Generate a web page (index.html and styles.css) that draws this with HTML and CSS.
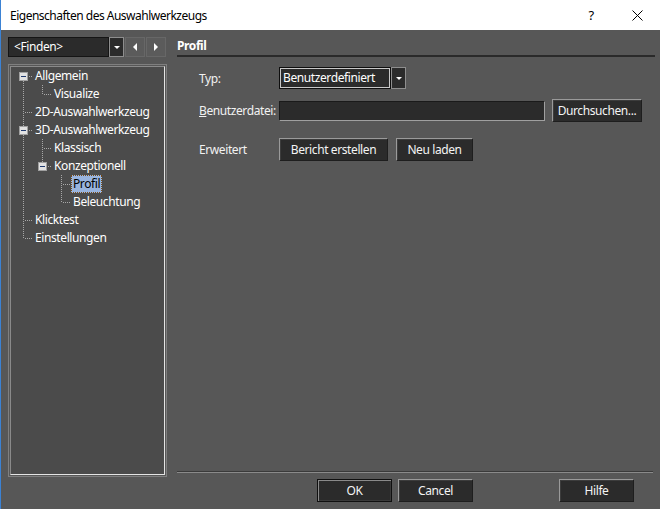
FILE: index.html
```html
<!DOCTYPE html>
<html lang="de">
<head>
<meta charset="utf-8">
<title>Eigenschaften des Auswahlwerkzeugs</title>
<link rel="stylesheet" href="styles.css">
</head>
<body>
<div class="titlebar">
  <span class="title">Eigenschaften des Auswahlwerkzeugs</span>
  <span class="tb-btn tb-help">?</span>
  <span class="tb-btn tb-close"><svg width="11" height="11" viewBox="0 0 11 11"><path d="M0.5 0.5 L10.5 10.5 M10.5 0.5 L0.5 10.5" stroke="#000" stroke-width="1" fill="none"/></svg></span>
</div>
<div class="window">
  <div class="left">
    <div class="findrow">
      <div class="find-input">&lt;Finden&gt;</div>
      <div class="dd-btn"><span class="tri-down"></span></div>
      <div class="nav-btn"><span class="tri-left"></span></div>
      <div class="nav-btn"><span class="tri-right"></span></div>
    </div>
    <div class="tree">
      <div class="tree-inner">
        <div class="row"><span class="cell root-first"><span class="box"></span></span><span class="label">Allgemein</span></div>
        <div class="row"><span class="cell pipe"></span><span class="cell elbow"></span><span class="label">Visualize</span></div>
        <div class="row"><span class="cell tee"></span><span class="label">2D-Auswahlwerkzeug</span></div>
        <div class="row"><span class="cell tee-box"><span class="box"></span></span><span class="label">3D-Auswahlwerkzeug</span></div>
        <div class="row"><span class="cell pipe"></span><span class="cell tee"></span><span class="label">Klassisch</span></div>
        <div class="row"><span class="cell pipe"></span><span class="cell elbow-box"><span class="box"></span></span><span class="label">Konzeptionell</span></div>
        <div class="row"><span class="cell pipe"></span><span class="cell"></span><span class="cell tee"></span><span class="label selected">Profil</span></div>
        <div class="row"><span class="cell pipe"></span><span class="cell"></span><span class="cell elbow"></span><span class="label">Beleuchtung</span></div>
        <div class="row"><span class="cell tee"></span><span class="label">Klicktest</span></div>
        <div class="row"><span class="cell elbow"></span><span class="label">Einstellungen</span></div>
      </div>
    </div>
  </div>
  <div class="right">
    <div class="heading">Profil</div>
    <div class="form">
      <div class="frow r1">
        <span class="flabel">Typ:</span>
        <div class="combo">Benutzerdefiniert</div>
        <div class="dd-btn big"><span class="tri-down"></span></div>
      </div>
      <div class="frow r2">
        <span class="flabel"><u>B</u>enutzerdatei:</span>
        <div class="textbox"></div>
        <div class="btn w-browse">Durchsuchen...</div>
      </div>
      <div class="frow r3">
        <span class="flabel">Erweitert</span>
        <div class="btn w-report">Bericht erstellen</div>
        <div class="btn w-reload">Neu laden</div>
      </div>
    </div>
    <div class="footer">
      <div class="separator"></div>
      <div class="buttons">
        <div class="btn default w-dlg">OK</div>
        <div class="btn w-dlg">Cancel</div>
        <div class="btn w-dlg help">Hilfe</div>
      </div>
    </div>
  </div>
</div>
</body>
</html>
```
FILE: styles.css
```css
* { box-sizing: border-box; }
html, body { margin: 0; padding: 0; }
body {
  width: 660px;
  height: 509px;
  overflow: hidden;
  font-family: "Noto Sans", "Open Sans", sans-serif;
  font-size: 12px;
  letter-spacing: -0.4px;
  background: #575757;
  color: #f2f2f2;
}
.titlebar {
  height: 30px;
  background: #ffffff;
  color: #000;
  display: flex;
  align-items: center;
  padding-left: 10px;
  border-left: 1px solid #3b82d4;
}
.title { flex: 1; margin-left: -1px; letter-spacing: -0.5px; }
.tb-btn {
  width: 46px;
  height: 30px;
  display: flex;
  align-items: center;
  justify-content: center;
  font-size: 13px;
}
.tb-close svg { display: block; }
.window {
  height: 479px;
  display: flex;
  border-left: 1px solid #3b82d4;
  padding: 7px 0 7px 7px;
}
.left {
  width: 159px;
  display: flex;
  flex-direction: column;
}
.findrow { display: flex; height: 20px; }
.find-input {
  width: 101px;
  height: 20px;
  background: #2b2b2b;
  border: 1px solid #151515;
  padding-left: 5px;
  line-height: 18px;
  color: #fff;
}
.dd-btn {
  width: 15px;
  height: 20px;
  background: #2b2b2b;
  border: 1px solid #8e8e8e;
  display: flex;
  align-items: center;
  justify-content: center;
}
.dd-btn.big { height: 22px; }
.tri-down {
  width: 0; height: 0;
  border-left: 3px solid transparent;
  border-right: 3px solid transparent;
  border-top: 3px solid #fff;
}
.nav-btn {
  width: 20px;
  height: 20px;
  margin-left: 1px;
  background: #5b5b5b;
  border: 1px solid #676767;
  display: flex;
  align-items: center;
  justify-content: center;
}
.tri-left {
  width: 0; height: 0;
  border-top: 4px solid transparent;
  border-bottom: 4px solid transparent;
  border-right: 4px solid #fff;
}
.tri-right {
  width: 0; height: 0;
  border-top: 4px solid transparent;
  border-bottom: 4px solid transparent;
  border-left: 4px solid #fff;
}
.tree {
  margin-top: 7px;
  height: 413px;
  border: 1px solid #7f7f7f;
  padding: 1px;
}
.tree-inner {
  height: 100%;
  background: #4b4b4b;
  border: 1px solid;
  border-color: #8a8a8a #e4e4e4 #e4e4e4 #8a8a8a;
  padding: 0 0 0 3px;
}
.row {
  display: flex;
  height: 18px;
  align-items: center;
  color: #fff;
}
.cell {
  width: 19px;
  height: 18px;
  flex: none;
  display: flex;
  align-items: center;
  padding-left: 5px;
}
.pipe {
  background: repeating-linear-gradient(to bottom, #a8a8a8 0 1px, transparent 1px 2px) 9px 0 / 1px 18px no-repeat;
}
.tee {
  background:
    repeating-linear-gradient(to bottom, #a8a8a8 0 1px, transparent 1px 2px) 9px 0 / 1px 18px no-repeat,
    repeating-linear-gradient(to right, #a8a8a8 0 1px, transparent 1px 2px) 11px 9px / 8px 1px no-repeat;
}
.elbow {
  background:
    repeating-linear-gradient(to bottom, #a8a8a8 0 1px, transparent 1px 2px) 9px 0 / 1px 9px no-repeat,
    repeating-linear-gradient(to right, #a8a8a8 0 1px, transparent 1px 2px) 11px 9px / 8px 1px no-repeat;
}
.root-first {
  background:
    repeating-linear-gradient(to bottom, #a8a8a8 0 1px, transparent 1px 2px) 9px 10px / 1px 8px no-repeat,
    repeating-linear-gradient(to right, #a8a8a8 0 1px, transparent 1px 2px) 15px 9px / 4px 1px no-repeat;
}
.tee-box {
  background:
    repeating-linear-gradient(to bottom, #a8a8a8 0 1px, transparent 1px 2px) 9px 0 / 1px 18px no-repeat,
    repeating-linear-gradient(to right, #a8a8a8 0 1px, transparent 1px 2px) 15px 9px / 4px 1px no-repeat;
}
.elbow-box {
  background:
    repeating-linear-gradient(to bottom, #a8a8a8 0 1px, transparent 1px 2px) 9px 0 / 1px 9px no-repeat,
    repeating-linear-gradient(to right, #a8a8a8 0 1px, transparent 1px 2px) 15px 9px / 4px 1px no-repeat;
}
.box {
  width: 9px;
  height: 9px;
  margin-top: 1px;
  background: #e2e2e2;
  border: 1px solid #a0a0a0;
  display: flex;
  align-items: center;
  justify-content: center;
}
.box::after {
  content: "";
  width: 5px;
  height: 1px;
  background: #1f3a6e;
}
.label {
  padding: 0 2px;
  height: 18px;
  line-height: 18px;
  white-space: nowrap;
}
.label.selected {
  background: #99b4de;
  color: #000;
  outline: 1px dotted #7a4a10;
  outline-offset: -1px;
}
.right {
  margin-left: 10px;
  width: 478px;
  display: flex;
  flex-direction: column;
}
.heading {
  height: 20px;
  line-height: 18px;
  font-weight: bold;
  border-bottom: 2px solid #2a2a2a;
  color: #fff;
}
.form {
  padding-left: 22px;
  margin-top: 10px;
}
.frow { display: flex; align-items: center; }
.r1 { height: 22px; }
.r2 { height: 23px; margin-top: 10px; }
.r3 { height: 23px; margin-top: 16px; }
.flabel { width: 80px; flex: none; white-space: nowrap; }
.combo {
  width: 112px;
  height: 22px;
  background: #2b2b2b;
  border: 1px solid #0e0e0e;
  box-shadow: inset 1px 1px 0 #c8c8c8, inset -1px -1px 0 #c8c8c8;
  padding-left: 3px;
  line-height: 20px;
  color: #fff;
}
.textbox {
  width: 266px;
  height: 20px;
  background: #2b2b2b;
  border: 1px solid;
  border-color: #1a1a1a #a0a0a0 #a0a0a0 #1a1a1a;
}
.btn {
  height: 23px;
  background: #2b2b2b;
  border: 1px solid;
  border-color: #9a9a9a #1e1e1e #1e1e1e #9a9a9a;
  box-shadow: inset 1px 1px 0 #3c3c3c;
  display: flex;
  align-items: center;
  justify-content: center;
  color: #f4f4f4;
  white-space: nowrap;
}
.w-browse { width: 90px; margin-left: 7px; }
.w-report { width: 109px; }
.w-reload { width: 77px; margin-left: 8px; }
.footer { margin-top: auto; }
.separator {
  height: 2px;
  border-top: 1px solid #3a3a3a;
  border-bottom: 1px solid #8a8a8a;
  margin-right: 2px;
}
.buttons {
  display: flex;
  margin-top: 6px;
  padding-left: 140px;
}
.w-dlg { width: 75px; }
.w-dlg + .w-dlg { margin-left: 6px; }
.btn.default {
  border-color: #101010;
  box-shadow: inset 1px 1px 0 #8a8a8a, inset -1px -1px 0 #3a3a3a;
}
.btn.help { margin-left: auto; margin-right: 21px; }
```
